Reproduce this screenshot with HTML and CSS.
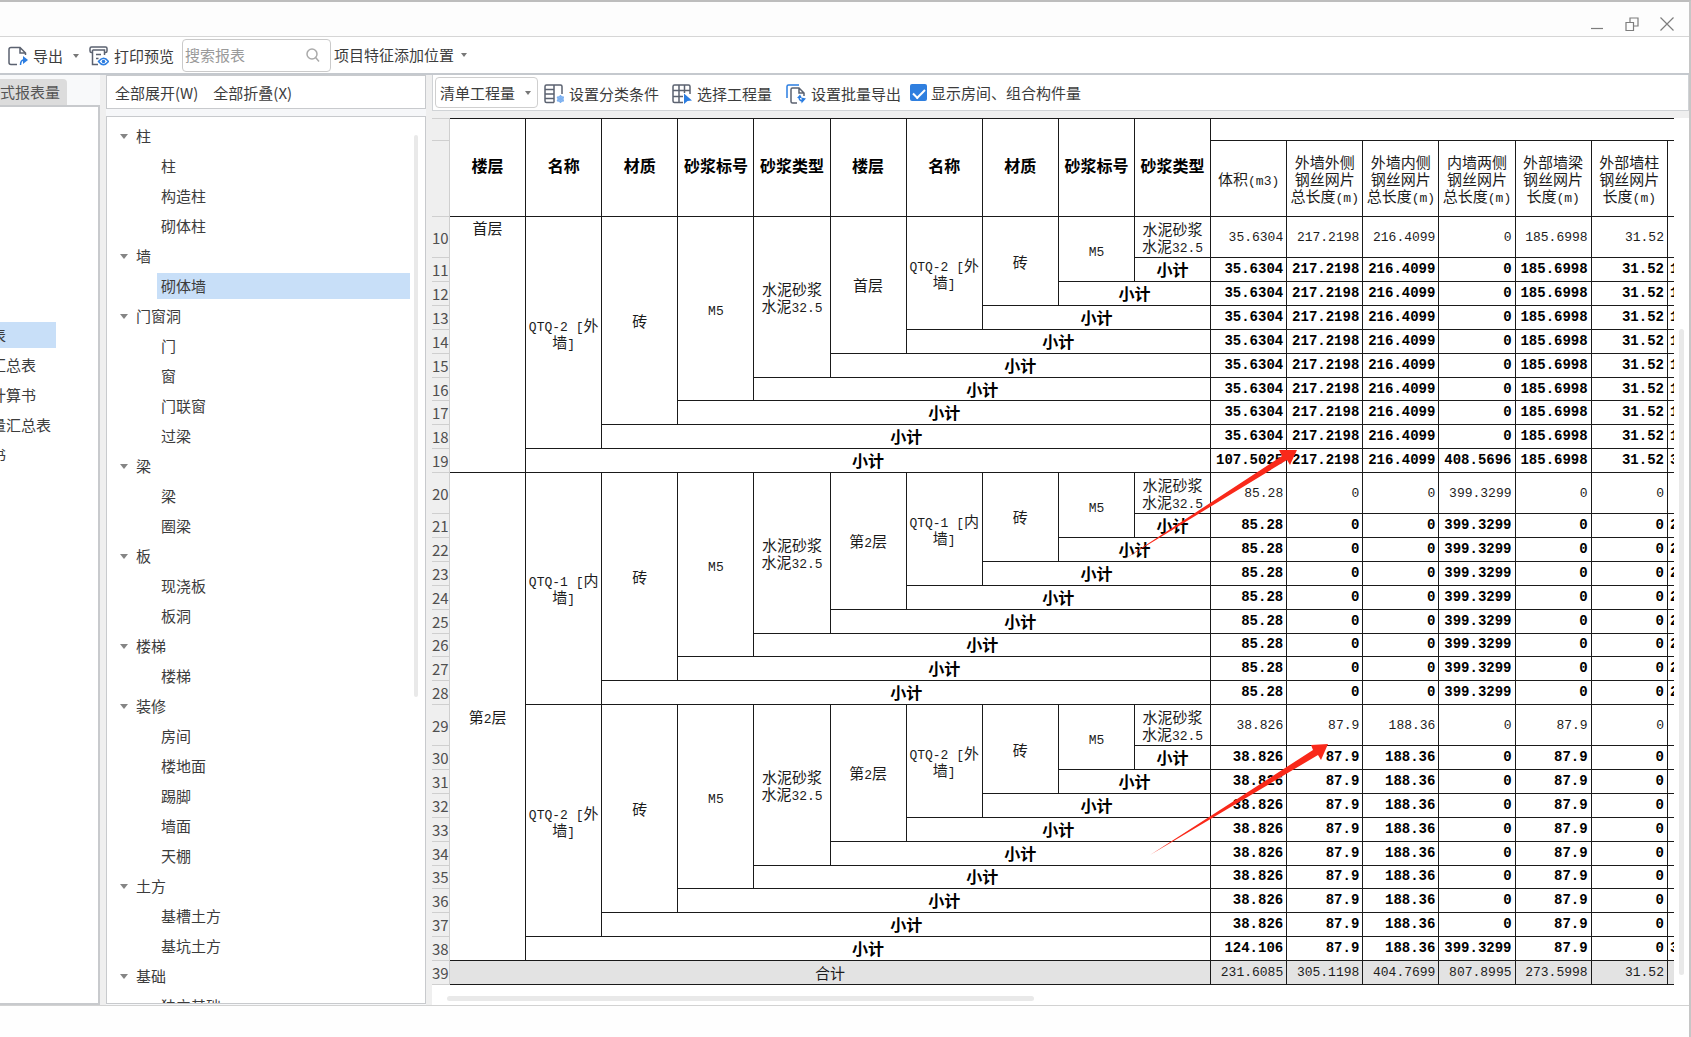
FILE: index.html
```html
<!DOCTYPE html>
<html lang="zh-CN">
<head>
<meta charset="utf-8">
<title>查看报表</title>
<link rel="stylesheet" href="styles.css">
</head>
<body>
<header class="titlebar">
  <button class="win-btn" aria-label="最小化"><svg width="14" height="14" viewBox="0 0 14 14"><path d="M1 11.5h12"/></svg></button>
  <button class="win-btn" aria-label="还原"><svg width="14" height="14" viewBox="0 0 14 14"><path d="M1 5.500h7.500v8H1zM5 5.500V1h8v8H8.500"/></svg></button>
  <button class="win-btn" aria-label="关闭"><svg width="14" height="14" viewBox="0 0 14 14"><path d="M.5.5l13 13M13.500.5L.5 13.500"/></svg></button>
</header>

<nav class="toolbar">
  <button class="tool export">
    <svg width="20" height="20" viewBox="0 0 20 20"><path class="ink" d="M9 18.500H3q-2 0-2-2v-13q0-2 2-2h9l5.500 5.500V9M12 1.500V7h5.500"/><path class="blue-line" d="M12.500 19q0-5 3.500-5"/><path class="blue" d="M15 10l5 4-5 4z"/></svg>
    <span>导出</span><i class="caret"></i>
  </button>
  <button class="tool print">
    <svg width="20" height="20" viewBox="0 0 20 20"><path class="ink" d="M3.500 6.500H2.500Q1 6.500 1 5V2.500Q1 1 2.500 1h14Q18 1 18 2.500V5q0 1.500-1.500 1.500h-1M3.500 4v14.500H9M15.500 9V4h-12M7 8.500h5M7 12.500h2.500"/><path class="blue-line" d="M9.500 15.500q5-6.500 10 0-5 6.500-10 0z"/><circle class="blue" cx="14.500" cy="15.500" r="1.800"/></svg>
    <span>打印预览</span>
  </button>
  <label class="search">
    <input type="text" placeholder="搜索报表" aria-label="搜索报表">
    <svg width="14" height="14" viewBox="0 0 14 14"><circle cx="6" cy="6" r="5"/><path d="M9.600 9.600L13 13.500"/></svg>
  </label>
  <button class="tool position"><span>项目特征添加位置</span><i class="caret"></i></button>
</nav>

<main class="workspace">
  <aside class="reports">
    <div class="tabs"><button class="tab">式报表量</button></div>
    <ul class="report-list">
      <li class="selected"><button>表</button></li>
      <li><button>汇总表</button></li>
      <li><button>计算书</button></li>
      <li><button>量汇总表</button></li>
      <li><button>书</button></li>
    </ul>
  </aside>

  <section class="components">
    <div class="fold-bar"><button>全部展开(W)</button><button>全部折叠(X)</button></div>
    <div class="tree-box">
      <ul class="tree">
        <li class="group"><button>柱</button></li>
        <li><button>柱</button></li>
        <li><button>构造柱</button></li>
        <li><button>砌体柱</button></li>
        <li class="group"><button>墙</button></li>
        <li class="selected"><button>砌体墙</button></li>
        <li class="group"><button>门窗洞</button></li>
        <li><button>门</button></li>
        <li><button>窗</button></li>
        <li><button>门联窗</button></li>
        <li><button>过梁</button></li>
        <li class="group"><button>梁</button></li>
        <li><button>梁</button></li>
        <li><button>圈梁</button></li>
        <li class="group"><button>板</button></li>
        <li><button>现浇板</button></li>
        <li><button>板洞</button></li>
        <li class="group"><button>楼梯</button></li>
        <li><button>楼梯</button></li>
        <li class="group"><button>装修</button></li>
        <li><button>房间</button></li>
        <li><button>楼地面</button></li>
        <li><button>踢脚</button></li>
        <li><button>墙面</button></li>
        <li><button>天棚</button></li>
        <li class="group"><button>土方</button></li>
        <li><button>基槽土方</button></li>
        <li><button>基坑土方</button></li>
        <li class="group"><button>基础</button></li>
        <li><button>独立基础</button></li>
      </ul>
      <div class="tree-scroll"><i class="thumb"></i></div>
    </div>
  </section>

  <section class="sheet">
    <div class="sheet-bar">
      <div class="picker">
        <select aria-label="工程量类型"><option>清单工程量</option></select><i class="caret"></i>
      </div>
      <button class="tool classify">
        <svg width="20" height="20" viewBox="0 0 20 20"><path class="ink" d="M10 18.500H2.500Q1 18.500 1 17V2.500Q1 1 2.500 1h14Q18 1 18 2.500V10M10 1v17.500M1 5.500h9M1 10h9M1 14.500h9"/><path class="pale-line" d="M16.500 11v8M13 13l7 4M13 17l7-4"/><circle class="pale-line" cx="16.500" cy="15" r="2.500"/></svg>
        <span>设置分类条件</span>
      </button>
      <button class="tool choose">
        <svg width="20" height="20" viewBox="0 0 20 20"><path class="ink" d="M11 18.500H2.500Q1 18.500 1 17V2.500Q1 1 2.500 1h14Q18 1 18 2.500V10M1 6.500h17M1 12.500h10M7 1v17.500M12.500 1v8"/><path class="blue" d="M12 9.500l8 7-4.500.5-3.500 3z"/></svg>
        <span>选择工程量</span>
      </button>
      <button class="tool batch">
        <svg width="20" height="20" viewBox="0 0 20 20"><path class="blue-line" d="M1 14V2.500Q1 1 2.500 1H13"/><path class="ink" d="M11 19H6.500Q5 19 5 17.500V5.500Q5 4 6.500 4H13l5 5v3M13 4v5h5"/><path class="blue-line" d="M13 13q0 4 4 4"/><path class="blue" d="M11 14l3-3.500 2 3.500zM20 14.500l-4.500-1v6z"/></svg>
        <span>设置批量导出</span>
      </button>
      <label class="check"><input type="checkbox" checked><span>显示房间、组合构件量</span></label>
    </div>

    <div class="grid-wrap">
      <div class="grid-main">
        <table class="grid">
          <colgroup><col class="c-num"><col><col><col><col><col><col><col><col><col><col><col><col><col><col><col><col><col class="c-cut"></colgroup>
          <thead>
            <tr class="top"><td class="no"></td><th rowspan="2">楼层</th><th rowspan="2">名称</th><th rowspan="2">材质</th><th rowspan="2">砂浆标号</th><th rowspan="2">砂浆类型</th><th rowspan="2">楼层</th><th rowspan="2">名称</th><th rowspan="2">材质</th><th rowspan="2">砂浆标号</th><th rowspan="2">砂浆类型</th><td colspan="7" class="open"></td></tr>
            <tr class="measures"><td class="no"></td><th>体积<b>(m3)</b></th><th>外墙外侧<br>钢丝网片<br>总长度<b>(m)</b></th><th>外墙内侧<br>钢丝网片<br>总长度<b>(m)</b></th><th>内墙两侧<br>钢丝网片<br>总长度<b>(m)</b></th><th>外部墙梁<br>钢丝网片<br>长度<b>(m)</b></th><th>外部墙柱<br>钢丝网片<br>长度<b>(m)</b></th><td class="open"></td></tr>
          </thead>
          <tbody>
            <tr class="tall"><td class="no">10</td><td rowspan="10" class="high">首层</td><td rowspan="9"><b>QTQ-2 [</b>外<br>墙<b>]</b></td><td rowspan="8">砖</td><td rowspan="7"><b>M5</b></td><td rowspan="6">水泥砂浆<br>水泥<b>32.5</b></td><td rowspan="5">首层</td><td rowspan="4"><b>QTQ-2 [</b>外<br>墙<b>]</b></td><td rowspan="3">砖</td><td rowspan="2"><b>M5</b></td><td>水泥砂浆<br>水泥<b>32.5</b></td><td class="n">35.6304</td><td class="n">217.2198</td><td class="n">216.4099</td><td class="n">0</td><td class="n">185.6998</td><td class="n">31.52</td><td class="open"></td></tr>
            <tr class="sub"><td class="no">11</td><td>小计</td><td class="n">35.6304</td><td class="n">217.2198</td><td class="n">216.4099</td><td class="n">0</td><td class="n">185.6998</td><td class="n">31.52</td><td class="open">1</td></tr>
            <tr class="sub"><td class="no">12</td><td colspan="2">小计</td><td class="n">35.6304</td><td class="n">217.2198</td><td class="n">216.4099</td><td class="n">0</td><td class="n">185.6998</td><td class="n">31.52</td><td class="open">1</td></tr>
            <tr class="sub"><td class="no">13</td><td colspan="3">小计</td><td class="n">35.6304</td><td class="n">217.2198</td><td class="n">216.4099</td><td class="n">0</td><td class="n">185.6998</td><td class="n">31.52</td><td class="open">1</td></tr>
            <tr class="sub"><td class="no">14</td><td colspan="4">小计</td><td class="n">35.6304</td><td class="n">217.2198</td><td class="n">216.4099</td><td class="n">0</td><td class="n">185.6998</td><td class="n">31.52</td><td class="open">1</td></tr>
            <tr class="sub"><td class="no">15</td><td colspan="5">小计</td><td class="n">35.6304</td><td class="n">217.2198</td><td class="n">216.4099</td><td class="n">0</td><td class="n">185.6998</td><td class="n">31.52</td><td class="open">1</td></tr>
            <tr class="sub"><td class="no">16</td><td colspan="6">小计</td><td class="n">35.6304</td><td class="n">217.2198</td><td class="n">216.4099</td><td class="n">0</td><td class="n">185.6998</td><td class="n">31.52</td><td class="open">1</td></tr>
            <tr class="sub"><td class="no">17</td><td colspan="7">小计</td><td class="n">35.6304</td><td class="n">217.2198</td><td class="n">216.4099</td><td class="n">0</td><td class="n">185.6998</td><td class="n">31.52</td><td class="open">1</td></tr>
            <tr class="sub"><td class="no">18</td><td colspan="8">小计</td><td class="n">35.6304</td><td class="n">217.2198</td><td class="n">216.4099</td><td class="n">0</td><td class="n">185.6998</td><td class="n">31.52</td><td class="open">1</td></tr>
            <tr class="sub"><td class="no">19</td><td colspan="9">小计</td><td class="n">107.5025</td><td class="n">217.2198</td><td class="n">216.4099</td><td class="n">408.5696</td><td class="n">185.6998</td><td class="n">31.52</td><td class="open">3</td></tr>

            <tr class="tall"><td class="no">20</td><td rowspan="19">第<b>2</b>层</td><td rowspan="9"><b>QTQ-1 [</b>内<br>墙<b>]</b></td><td rowspan="8">砖</td><td rowspan="7"><b>M5</b></td><td rowspan="6">水泥砂浆<br>水泥<b>32.5</b></td><td rowspan="5">第<b>2</b>层</td><td rowspan="4"><b>QTQ-1 [</b>内<br>墙<b>]</b></td><td rowspan="3">砖</td><td rowspan="2"><b>M5</b></td><td>水泥砂浆<br>水泥<b>32.5</b></td><td class="n">85.28</td><td class="n">0</td><td class="n">0</td><td class="n">399.3299</td><td class="n">0</td><td class="n">0</td><td class="open"></td></tr>
            <tr class="sub"><td class="no">21</td><td>小计</td><td class="n">85.28</td><td class="n">0</td><td class="n">0</td><td class="n">399.3299</td><td class="n">0</td><td class="n">0</td><td class="open">2</td></tr>
            <tr class="sub"><td class="no">22</td><td colspan="2">小计</td><td class="n">85.28</td><td class="n">0</td><td class="n">0</td><td class="n">399.3299</td><td class="n">0</td><td class="n">0</td><td class="open">2</td></tr>
            <tr class="sub"><td class="no">23</td><td colspan="3">小计</td><td class="n">85.28</td><td class="n">0</td><td class="n">0</td><td class="n">399.3299</td><td class="n">0</td><td class="n">0</td><td class="open">2</td></tr>
            <tr class="sub"><td class="no">24</td><td colspan="4">小计</td><td class="n">85.28</td><td class="n">0</td><td class="n">0</td><td class="n">399.3299</td><td class="n">0</td><td class="n">0</td><td class="open">2</td></tr>
            <tr class="sub"><td class="no">25</td><td colspan="5">小计</td><td class="n">85.28</td><td class="n">0</td><td class="n">0</td><td class="n">399.3299</td><td class="n">0</td><td class="n">0</td><td class="open">2</td></tr>
            <tr class="sub"><td class="no">26</td><td colspan="6">小计</td><td class="n">85.28</td><td class="n">0</td><td class="n">0</td><td class="n">399.3299</td><td class="n">0</td><td class="n">0</td><td class="open">2</td></tr>
            <tr class="sub"><td class="no">27</td><td colspan="7">小计</td><td class="n">85.28</td><td class="n">0</td><td class="n">0</td><td class="n">399.3299</td><td class="n">0</td><td class="n">0</td><td class="open">2</td></tr>
            <tr class="sub"><td class="no">28</td><td colspan="8">小计</td><td class="n">85.28</td><td class="n">0</td><td class="n">0</td><td class="n">399.3299</td><td class="n">0</td><td class="n">0</td><td class="open">2</td></tr>

            <tr class="tall"><td class="no">29</td><td rowspan="9"><b>QTQ-2 [</b>外<br>墙<b>]</b></td><td rowspan="8">砖</td><td rowspan="7"><b>M5</b></td><td rowspan="6">水泥砂浆<br>水泥<b>32.5</b></td><td rowspan="5">第<b>2</b>层</td><td rowspan="4"><b>QTQ-2 [</b>外<br>墙<b>]</b></td><td rowspan="3">砖</td><td rowspan="2"><b>M5</b></td><td>水泥砂浆<br>水泥<b>32.5</b></td><td class="n">38.826</td><td class="n">87.9</td><td class="n">188.36</td><td class="n">0</td><td class="n">87.9</td><td class="n">0</td><td class="open"></td></tr>
            <tr class="sub"><td class="no">30</td><td>小计</td><td class="n">38.826</td><td class="n">87.9</td><td class="n">188.36</td><td class="n">0</td><td class="n">87.9</td><td class="n">0</td><td class="open"></td></tr>
            <tr class="sub"><td class="no">31</td><td colspan="2">小计</td><td class="n">38.826</td><td class="n">87.9</td><td class="n">188.36</td><td class="n">0</td><td class="n">87.9</td><td class="n">0</td><td class="open"></td></tr>
            <tr class="sub"><td class="no">32</td><td colspan="3">小计</td><td class="n">38.826</td><td class="n">87.9</td><td class="n">188.36</td><td class="n">0</td><td class="n">87.9</td><td class="n">0</td><td class="open"></td></tr>
            <tr class="sub"><td class="no">33</td><td colspan="4">小计</td><td class="n">38.826</td><td class="n">87.9</td><td class="n">188.36</td><td class="n">0</td><td class="n">87.9</td><td class="n">0</td><td class="open"></td></tr>
            <tr class="sub"><td class="no">34</td><td colspan="5">小计</td><td class="n">38.826</td><td class="n">87.9</td><td class="n">188.36</td><td class="n">0</td><td class="n">87.9</td><td class="n">0</td><td class="open"></td></tr>
            <tr class="sub"><td class="no">35</td><td colspan="6">小计</td><td class="n">38.826</td><td class="n">87.9</td><td class="n">188.36</td><td class="n">0</td><td class="n">87.9</td><td class="n">0</td><td class="open"></td></tr>
            <tr class="sub"><td class="no">36</td><td colspan="7">小计</td><td class="n">38.826</td><td class="n">87.9</td><td class="n">188.36</td><td class="n">0</td><td class="n">87.9</td><td class="n">0</td><td class="open"></td></tr>
            <tr class="sub"><td class="no">37</td><td colspan="8">小计</td><td class="n">38.826</td><td class="n">87.9</td><td class="n">188.36</td><td class="n">0</td><td class="n">87.9</td><td class="n">0</td><td class="open"></td></tr>
            <tr class="sub"><td class="no">38</td><td colspan="9">小计</td><td class="n">124.106</td><td class="n">87.9</td><td class="n">188.36</td><td class="n">399.3299</td><td class="n">87.9</td><td class="n">0</td><td class="open">3</td></tr>
            <tr class="total"><td class="no">39</td><td colspan="10">合计</td><td class="n">231.6085</td><td class="n">305.1198</td><td class="n">404.7699</td><td class="n">807.8995</td><td class="n">273.5998</td><td class="n">31.52</td><td class="open"></td></tr>
          </tbody>
        </table>
        <div class="h-scroll"><i class="thumb"></i></div>
      </div>
      <div class="v-scroll"><i class="thumb"></i></div>
      <svg class="marks" width="920" height="760" viewBox="0 0 920 760" aria-hidden="true">
        <path d="M691 442L850 338 847 332 865 332 858 347 855 342z"/>
        <path d="M718 737L881 632 879 627 896 626 889 642 886 637z"/>
      </svg>
    </div>
  </section>
</main>
<footer class="statusbar"></footer>
</body>
</html>
```

FILE: styles.css
```css
* { box-sizing: border-box; }

body {
  margin: 0;
  height: 100vh;
  display: flex;
  flex-direction: column;
  overflow: hidden;
  background: #fff;
  border-top: 2px solid #bdbdbd;
  border-right: 2px solid #c6c6c6;
  color: #3c3c3c;
  font: 15px/20px "Noto Sans CJK SC", sans-serif;
}

button, input, select {
  margin: 0;
  padding: 0;
  border: 0;
  background: none;
  color: inherit;
  font: inherit;
  white-space: nowrap;
}

ul { margin: 0; padding: 0; list-style: none; }

svg { flex: none; fill: none; }
.ink { stroke: #5b6270; stroke-width: 1.5; }
.blue { fill: #2b7de1; }
.blue-line { stroke: #2b7de1; stroke-width: 1.5; }
.pale-line { stroke: #7fb2f0; stroke-width: 1.5; }

.caret {
  flex: none;
  border: 3px solid transparent;
  border-top: 4px solid #777;
  border-bottom: 0;
}

/* window caption */
.titlebar {
  flex: none;
  height: 35px;
  display: flex;
  justify-content: flex-end;
  align-items: center;
  gap: 21px;
  padding: 10px 15px 0 0;
  background: #fdfdfd;
  border-bottom: 1px solid #d6d6d6;
}
.win-btn { display: flex; stroke: #7d7d7d; stroke-width: 1.2; }

/* main toolbar */
.toolbar {
  flex: none;
  height: 38px;
  display: flex;
  align-items: center;
  padding-left: 8px;
  border-bottom: 2px solid #c5c9ce;
}
.tool { display: flex; align-items: center; gap: 5px; }
.toolbar .export, .toolbar .print { padding-top: 2px; }
.export { margin-right: 10px; }
.export .caret { margin-left: 5px; }
.search {
  display: flex;
  align-items: center;
  width: 149px;
  height: 33px;
  margin: 0 3px 0 8px;
  padding: 0 10px 0 2px;
  border: 1px solid #cacaca;
  border-radius: 4px;
}
.search input { flex: 1; min-width: 0; outline: none; }
.search input::placeholder { color: #9a9a9a; }
.search svg { stroke: #aaa; stroke-width: 1.5; }
.position .caret { margin-left: 2px; }

/* three-part work area */
.workspace {
  flex: 1;
  min-height: 0;
  display: flex;
  gap: 6px;
  background: #efefef;
}

.reports { flex: none; width: 100px; display: flex; flex-direction: column; overflow: hidden; }
.tabs { height: 30px; display: flex; align-items: flex-end; background: #f8f9fa; }
.tab { height: 26px; padding-right: 7px; background: #dcdcdc; border-radius: 0 4px 0 0; color: #555; }
.report-list {
  flex: 1;
  min-height: 0;
  padding-top: 213px;
  background: #fff;
  border: 2px solid #c8cacd;
  border-left: 0;
}
.report-list li { height: 30px; padding-top: 2px; }
.report-list button { width: 65px; height: 26px; margin-left: -9px; text-align: left; }
.selected button { background: #c8dff8; }

.components { flex: none; width: 320px; display: flex; flex-direction: column; gap: 7px; padding-bottom: 1px; background: #f6f7f9; }
.fold-bar {
  flex: none;
  height: 34px;
  display: flex;
  align-items: center;
  gap: 15px;
  padding: 2px 0 0 8px;
  background: #fff;
  border: 1px solid #c8cacd;
}
.tree-box { flex: 1; min-height: 0; display: flex; overflow: hidden; background: #fff; border: 1px solid #c8cacd; }
.tree { flex: 1; padding: 4px 4px 0 50px; }
.tree li { display: flex; align-items: center; height: 30px; }
.tree li button { flex: 1; height: 26px; padding-left: 4px; text-align: left; }
.tree .group { margin-left: -37px; }
.tree .group::before { content: ""; border: 4px solid transparent; border-top: 5px solid #858585; border-bottom: 0; }
.tree .group button { padding-left: 8px; }
.tree-scroll { display: grid; grid-template-rows: 18fr 561fr 306fr; width: 11px; }
.thumb { display: block; background: #e9e9e9; border-radius: 3px; }
.tree-scroll .thumb { grid-row: 2; width: 4px; }

/* report sheet */
.sheet { flex: 1; min-width: 0; display: flex; flex-direction: column; gap: 7px; }
.sheet-bar {
  flex: none;
  height: 36px;
  display: flex;
  align-items: center;
  padding-left: 2px;
  background: #fff;
  border: 1px solid #d0d3d6;
  border-top: 0;
}
.picker {
  display: flex;
  align-items: center;
  width: 103px;
  height: 31px;
  padding: 0 6px 0 4px;
  margin-right: 6px;
  border: 1px solid #cfcfcf;
  border-radius: 4px;
}
.picker select { flex: 1; min-width: 0; height: 29px; appearance: none; outline: none; }
.sheet-bar .tool { padding-top: 2px; }
.classify, .choose { margin-right: 13px; }
.choose { margin-right: 14px; }
.batch { margin-right: 9px; }
.check { display: flex; align-items: center; gap: 4px; }
.check input {
  appearance: none;
  width: 17px;
  height: 17px;
  border-radius: 2px;
  background: #2f7fdf;
  display: grid;
  place-items: center;
}
.check input:checked::before {
  content: "";
  width: 10px;
  height: 5px;
  border: solid #fff;
  border-width: 0 0 2px 2px;
  transform: rotate(-45deg);
}

.grid-wrap { position: relative; flex: 1; min-height: 0; display: flex; overflow: hidden; background: #fff; }
.grid-main { flex: 1; min-width: 0; display: flex; flex-direction: column; overflow: hidden; }
.h-scroll { flex: none; height: 20px; display: grid; grid-template-columns: 15fr 587fr 641fr; padding: 11px 0 4px; }
.h-scroll .thumb { grid-column: 2; }
.v-scroll { flex: none; width: 15px; display: grid; grid-template-rows: 211fr 645fr 30fr; padding: 0 5px; }
.v-scroll .thumb { grid-row: 2; }
.marks { position: absolute; top: 0; left: 0; fill: #f9291a; pointer-events: none; }

.grid {
  flex: 1;
  width: 100%;
  min-height: 0;
  table-layout: fixed;
  border-collapse: separate;
  border-spacing: 0;
  color: #1c1c1c;
  line-height: 17px;
}
.c-num { width: 18px; }
.c-cut { width: 6px; }
.grid th, .grid td {
  padding: 0;
  overflow: hidden;
  border: solid #1a1a1a;
  border-width: 0 1px 1px 0;
  text-align: center;
  vertical-align: middle;
  white-space: nowrap;
}
.grid b { font: 13px/1px "Liberation Mono", monospace; }
.grid .top th, .grid .top td { border-top-width: 1px; }
.grid th { padding-bottom: 4px; color: #000; font-size: 16px; font-weight: 700; }
.grid .measures th { padding-bottom: 0; color: #1c1c1c; font-size: 15px; font-weight: 400; }
.grid .no {
  background: #efefef;
  border-color: #cfcfcf;
  color: #505050;
  text-align: left;
}
.grid .high { vertical-align: top; padding-top: 2px; }
.grid .n { padding-right: 3px; text-align: right; font: 13px/17px "Liberation Mono", monospace; }
.grid .open { border-right: 0; padding-left: 2px; text-align: left; font-family: "Liberation Mono", monospace; }
.grid .sub td:not(.no) { color: #000; font-size: 16px; font-weight: 700; }
.grid .sub td.n, .grid .sub td.open { font-size: 14px; }
.grid .total td:not(.no) { background: #e3e3e3; }

.top { height: 23px; }
.measures { height: 76px; }
.tall { height: 40px; }
.sub, .total { height: 23px; }

.statusbar { flex: none; height: 32px; border-top: 1px solid #d2d2d2; background: #fefefe; }
```
